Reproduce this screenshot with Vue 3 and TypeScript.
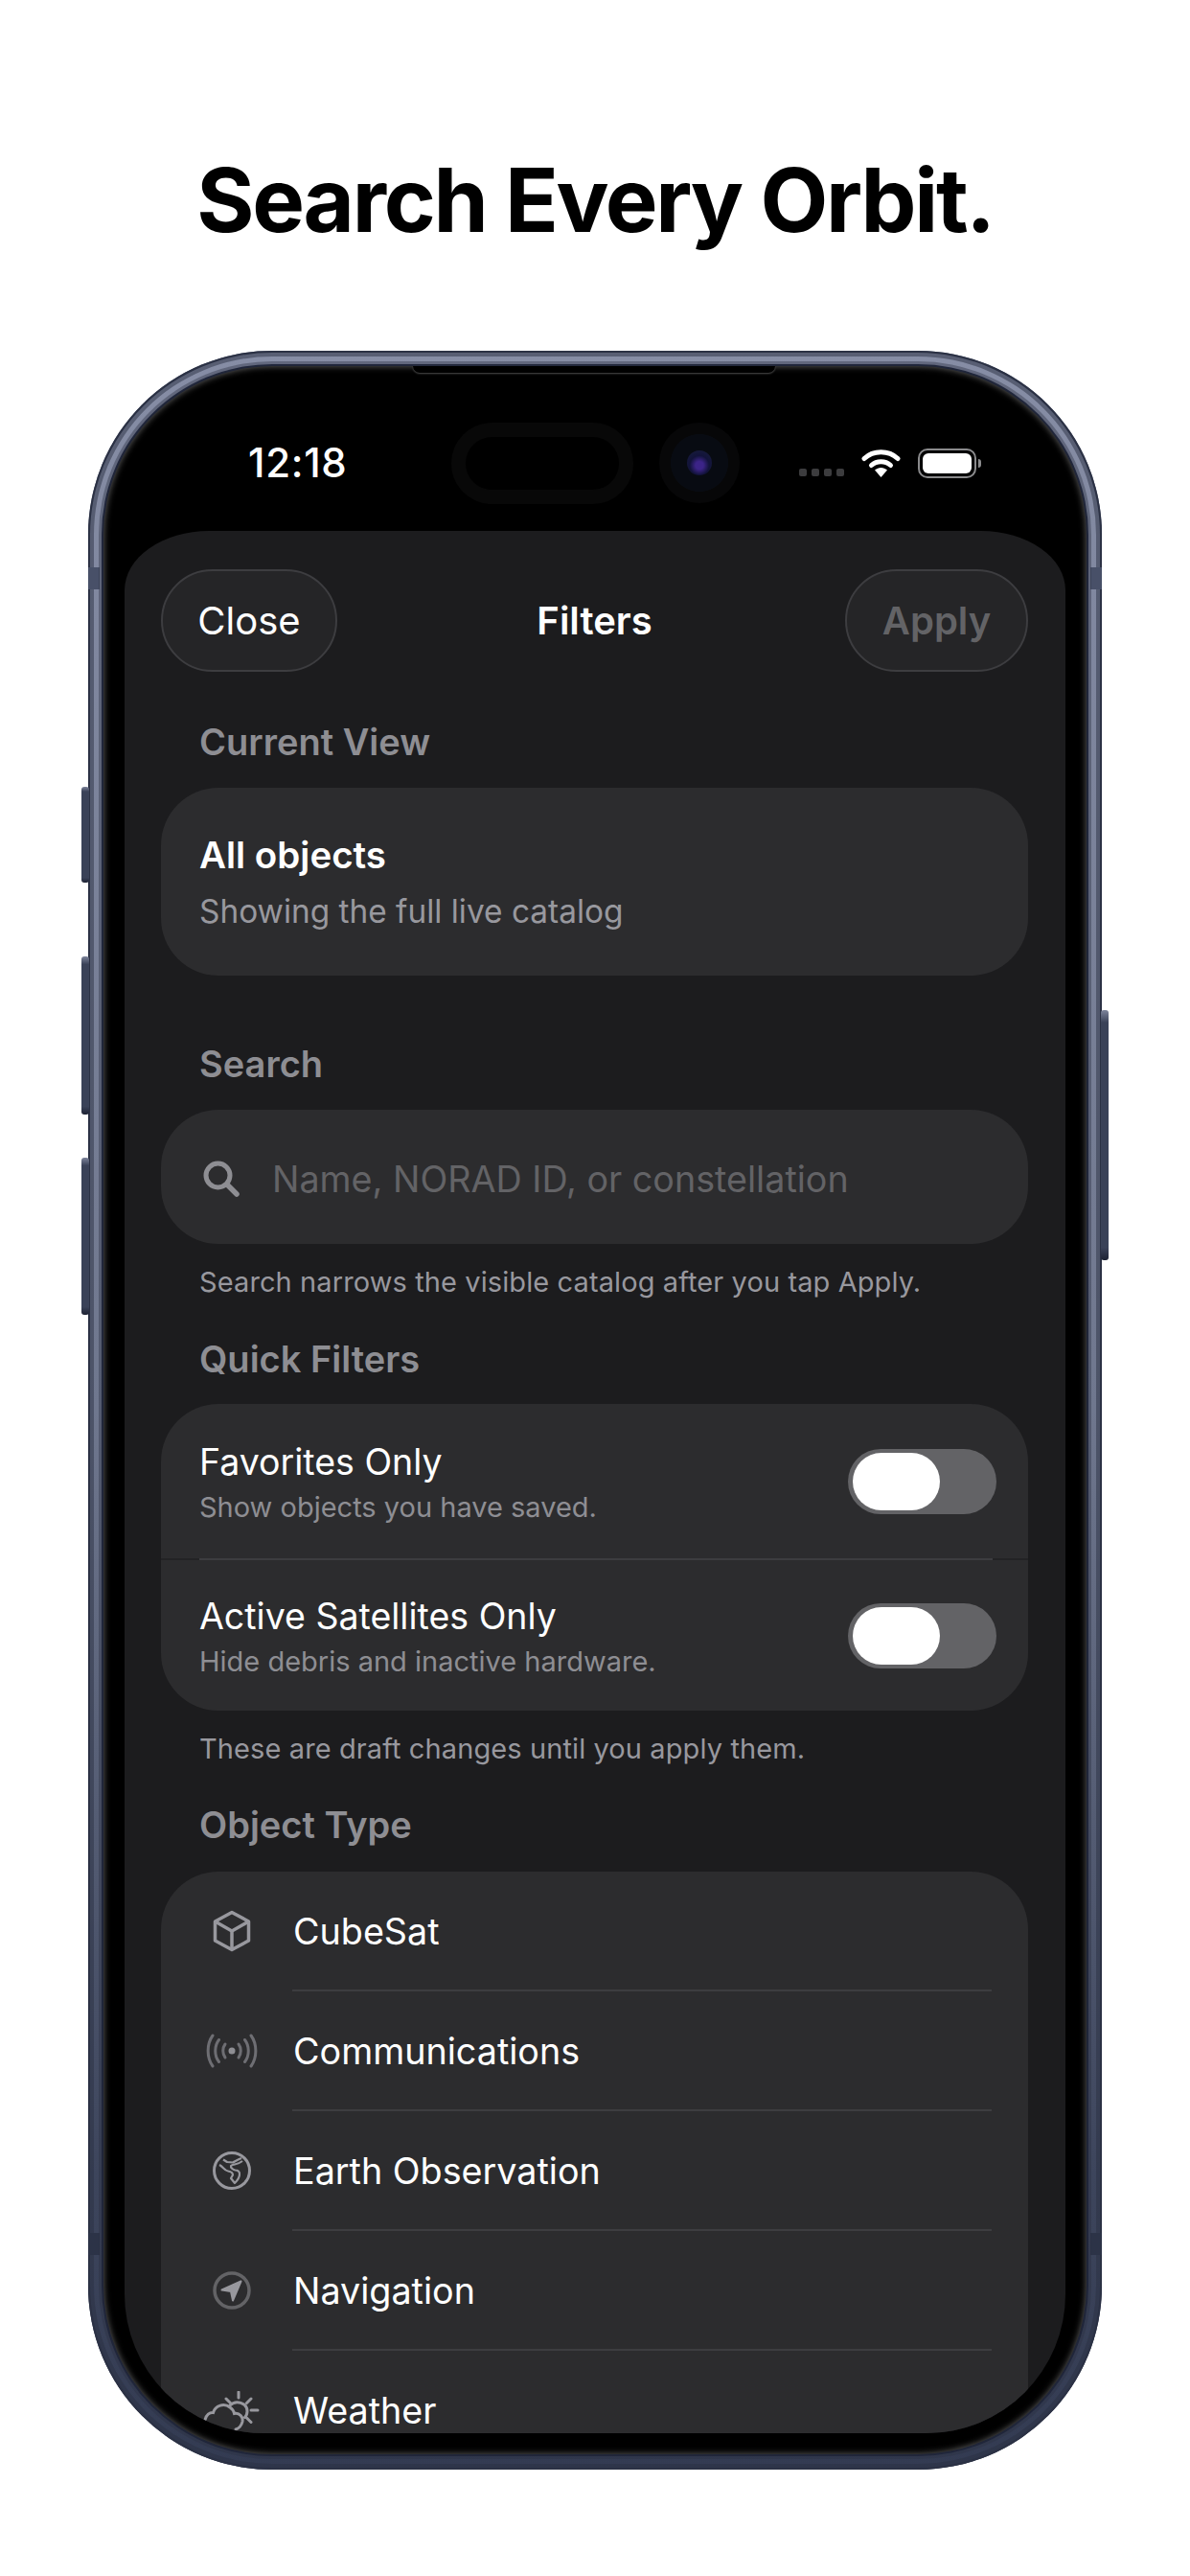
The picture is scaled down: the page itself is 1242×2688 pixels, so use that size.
<template>
  <div class="page">
    <h1 class="headline">Search Every Orbit.</h1>

    <div class="phone">
      <span class="side-btn left b1"></span>
      <span class="side-btn left b2"></span>
      <span class="side-btn left b3"></span>
      <span class="side-btn right b4"></span>
      <span class="band l-top"></span>
      <span class="band r-top"></span>
      <span class="band l-bot"></span>
      <span class="band r-bot"></span>

      <div class="bezel">
        <span class="notch"></span>

        <div class="status">
          <span class="time">12:18</span>
          <span class="island"></span>
          <span class="camera"><i></i></span>
          <span class="signal"><i v-for="n in 4" :key="n"></i></span>
          <svg class="wifi" viewBox="0 0 41 30" width="41" height="30">
            <path d="M3 10.5C12.5 1.5 28.500 1.500 38 10.500" fill="none" stroke="#fff" stroke-width="5" stroke-linecap="round" />
            <path d="M10.500 17.500C16 12.500 25 12.500 30.500 17.500" fill="none" stroke="#fff" stroke-width="5" stroke-linecap="round" />
            <path d="M14 22.500C18 19 23 19 27 22.500L20.500 30Z" fill="#fff" />
          </svg>
          <span class="battery"><i></i></span>
          <span class="battery-tip"></span>
        </div>

        <div class="sheet">
          <div class="sheet-head">
            <button class="pill close">Close</button>
            <span class="sheet-title">Filters</span>
            <button class="pill apply">Apply</button>
          </div>

          <div class="section-label first">Current View</div>
          <div class="card view-card">
            <div class="view-title">All objects</div>
            <div class="view-sub">Showing the full live catalog</div>
          </div>

          <div class="section-label search-label">Search</div>
          <div class="card search-card">
            <svg class="search-icon" viewBox="0 0 38 38" width="38" height="38">
              <circle cx="15.500" cy="15.500" r="12.500" fill="none" stroke="#8e8e93" stroke-width="5" />
              <path d="M25 25L35 35" stroke="#8e8e93" stroke-width="5.500" stroke-linecap="round" />
            </svg>
            <span class="placeholder">Name, NORAD ID, or constellation</span>
          </div>
          <div class="hint">Search narrows the visible catalog after you tap Apply.</div>

          <div class="section-label quick-label">Quick Filters</div>
          <div class="card">
            <template v-for="(item, i) in toggles" :key="item.title">
              <div class="divider" v-if="i > 0"><i></i></div>
              <div class="toggle-row" :class="{ 'is-first': i === 0 }">
                <div class="toggle-text">
                  <div class="toggle-title">{{ item.title }}</div>
                  <div class="toggle-sub">{{ item.sub }}</div>
                </div>
                <span class="toggle"><i></i></span>
              </div>
            </template>
          </div>
          <div class="hint">These are draft changes until you apply them.</div>

          <div class="section-label type-label">Object Type</div>
          <div class="card">
            <template v-for="(type, i) in types" :key="type.name">
              <div class="type-divider" v-if="i > 0"></div>
              <div class="type-row">
                <span class="type-icon">
                  <svg v-if="type.icon === 'cube'" viewBox="0 0 40 44" width="40" height="44" fill="none" stroke="#98989e" stroke-width="3.500" stroke-linejoin="round">
                    <path d="M20 2.500L37.500 12V32L20 41.500L2.500 32V12Z" />
                    <path d="M2.500 12L20 22L37.500 12M20 22V41.500" />
                  </svg>
                  <svg v-else-if="type.icon === 'antenna'" viewBox="0 0 54 36" width="54" height="36" fill="none" stroke="#6e6e73" stroke-width="3" stroke-linecap="round">
                    <circle cx="27" cy="18" r="3.500" fill="#8e8e93" stroke="none" />
                    <path d="M20 11C17 15 17 21 20 25M34 11C37 15 37 21 34 25" />
                    <path d="M13.500 6.500C8.500 13 8.500 23 13.500 29.500M40.500 6.500C45.500 13 45.500 23 40.500 29.500" />
                    <path d="M7 2C0.500 11 0.500 25 7 34M47 2C53.500 11 53.500 25 47 34" />
                  </svg>
                  <svg v-else-if="type.icon === 'earth'" viewBox="0 0 40 40" width="40" height="40" fill="none" stroke="#98989e">
                    <circle cx="20" cy="20" r="18.500" stroke-width="3" />
                    <path d="M30 7C26 8.500 24 10 21 11.500L15 11L11 8.500M7 14C11 16 12 20 16 20.500C19 21 21 22 21 24.500L19 28L23 33C26 30 28 27 28 24C28.500 21 26 19.500 23.500 19.500C21 19 18.500 17 19 15C21 13 26 14 31 10" stroke-width="2.200" stroke-linejoin="round" />
                  </svg>
                  <svg v-else-if="type.icon === 'nav'" viewBox="0 0 40 40" width="40" height="40">
                    <circle cx="20" cy="20" r="18" fill="none" stroke="#636366" stroke-width="3.500" />
                    <path d="M29.500 10.500L9.500 19.500L19 21L21 30.500Z" fill="#98989e" stroke="#98989e" stroke-width="2" stroke-linejoin="round" />
                  </svg>
                  <svg v-else class="weather" viewBox="0 0 60 50" width="60" height="50" fill="none" stroke="#98989e" stroke-width="3" stroke-linecap="round">
                    <path d="M37 1V7M24 8L28.500 12.500M50 8L45.500 12.500M50 20H57M45.500 28L50 32.500" />
                    <path d="M28 15C34 9 46 12 46 21C46 24 45 26 43.500 27.500" />
                    <path d="M2 30C3 25 7 22 10.500 22.500C12.500 15 22 12 28 17C31 19 32 21 32.500 23.500C38 22.500 42 27 41 32C40 36 37 39 34 40" />
                  </svg>
                </span>
                <span class="type-name">{{ type.name }}</span>
              </div>
            </template>
          </div>
        </div>
      </div>
    </div>
  </div>
</template>

<script setup lang="ts">
const toggles = [
  { title: 'Favorites Only', sub: 'Show objects you have saved.' },
  { title: 'Active Satellites Only', sub: 'Hide debris and inactive hardware.' },
]

const types = [
  { name: 'CubeSat', icon: 'cube' },
  { name: 'Communications', icon: 'antenna' },
  { name: 'Earth Observation', icon: 'earth' },
  { name: 'Navigation', icon: 'nav' },
  { name: 'Weather', icon: 'weather' },
]
</script>

<style>
html,
body {
  margin: 0;
  background: #fff;
}
</style>

<style scoped>
.page {
  width: 1242px;
  height: 2688px;
  background: #fff;
  display: flex;
  flex-direction: column;
  align-items: center;
  font-family: Inter, "Liberation Sans", sans-serif;
  overflow: hidden;
}

.headline {
  margin: 159px 0 107px;
  font-size: 92px;
  line-height: 100px;
  font-weight: 700;
  letter-spacing: -2.300px;
  color: #000;
}

.phone {
  position: relative;
  width: 1058px;
  height: 2211px;
  padding: 16px;
  box-sizing: border-box;
  border-radius: 192px;
  background: linear-gradient(180deg, #868da5 0%, #6f778e 50%, #3d455c 86%, #333b52 100%);
  box-shadow: inset 0 0 0 2px #2b3144, inset 0 0 0 6px rgba(42, 48, 66, 0.5);
}

.side-btn {
  position: absolute;
  width: 8px;
  border-radius: 3px;
  background: linear-gradient(180deg, #7d849b 0, #3a4258 5%, #3a4258 95%, #1d2233 100%);
}
.side-btn.left { left: -7px; }
.side-btn.right { right: -7px; }
.b1 { top: 455px; height: 100px; }
.b2 { top: 632px; height: 165px; }
.b3 { top: 842px; height: 164px; }
.b4 { top: 688px; height: 261px; }

.band {
  position: absolute;
  width: 12px;
  height: 23px;
  background: #485068;
}
.l-top { left: 0; top: 226px; }
.r-top { right: 0; top: 226px; }
.l-bot { left: 0; top: 1964px; background: #2c3347; }
.r-bot { right: 0; top: 1964px; background: #2c3347; }

.bezel {
  position: relative;
  height: 100%;
  display: flex;
  flex-direction: column;
  background: #000;
  border-radius: 176px;
  box-shadow: inset 0 0 7px rgba(255, 255, 255, 0.4), 0 0 0 2px #20263a, 0 0 0 5px rgba(42, 48, 66, 0.4);
}

.notch {
  position: absolute;
  left: 323px;
  top: 0;
  width: 378px;
  height: 7px;
  background: #000;
  border-radius: 0 0 10px 10px;
  box-shadow: 0 1px 2px rgba(255, 255, 255, 0.3);
}

.status {
  height: 172px;
  flex: none;
  box-sizing: border-box;
  padding: 30px 0 0 151px;
  display: flex;
  align-items: center;
}

.time {
  width: 101px;
  font-size: 42px;
  line-height: 48px;
  font-weight: 500;
  letter-spacing: 0.700px;
  color: #fff;
  white-space: nowrap;
}

.island {
  width: 190px;
  height: 85px;
  margin-left: 111px;
  box-sizing: border-box;
  border-radius: 43px;
  border: 15px solid #080808;
  background: #000;
}

.camera {
  width: 84px;
  height: 84px;
  margin-left: 27px;
  border-radius: 50%;
  background: radial-gradient(circle, #080b12 0 50%, #070708 51% 100%);
  display: flex;
  align-items: center;
  justify-content: center;
}
.camera i {
  width: 26px;
  height: 26px;
  border-radius: 50%;
  background: radial-gradient(circle at 50% 60%, #3c2488 0 20%, #12133a 50%, #1a1f3c 100%);
}

.signal {
  display: flex;
  gap: 5px;
  margin-left: 62px;
  align-self: center;
  padding-top: 20px;
}
.signal i {
  width: 8px;
  height: 8px;
  border-radius: 2px;
  background: #3c3c3e;
}

.wifi {
  margin-left: 18px;
}

.battery {
  width: 61px;
  height: 31px;
  margin-left: 18px;
  box-sizing: border-box;
  border: 2px solid #8a8a8c;
  border-radius: 10px;
  padding: 3px;
  display: flex;
}
.battery i {
  flex: 1;
  background: #fff;
  border-radius: 6px;
}
.battery-tip {
  width: 3px;
  height: 9px;
  margin-left: 2px;
  background: #8a8a8c;
  border-radius: 0 3px 3px 0;
}

.sheet {
  flex: 1;
  min-height: 0;
  margin: 0 22px 22px 22px;
  padding: 40px 39px 0 38px;
  box-sizing: border-box;
  overflow: hidden;
  background: #1c1c1e;
  border-radius: 88px 88px 145px 145px / 62px 62px 145px 145px;
}

.sheet-head {
  display: grid;
  grid-template-columns: 1fr auto 1fr;
  align-items: center;
}

.pill {
  height: 107px;
  box-sizing: border-box;
  border-radius: 54px;
  border: 2px solid #3d3d40;
  background: #252527;
  font-family: inherit;
  font-size: 40px;
  padding: 0;
}
.close {
  width: 184px;
  justify-self: start;
  color: #fff;
  font-weight: 400;
}
.apply {
  width: 191px;
  justify-self: end;
  color: #636366;
  font-weight: 600;
}

.sheet-title {
  font-size: 40px;
  font-weight: 600;
  color: #fff;
}

.section-label {
  padding-left: 40px;
  height: 48px;
  margin-bottom: 24px;
  font-size: 38px;
  line-height: 48px;
  font-weight: 600;
  color: #8e8e93;
}
.first { margin-top: 49px; }
.search-label { margin-top: 68px; }
.quick-label { margin-top: 36px; margin-bottom: 23px; }
.type-label { margin-top: 35px; margin-bottom: 25px; }

.card {
  background: #2c2c2e;
  border-radius: 60px;
  overflow: hidden;
}

.view-card {
  height: 196px;
  box-sizing: border-box;
  padding: 46px 40px 0;
}
.view-title {
  font-size: 38.500px;
  line-height: 48px;
  font-weight: 600;
  color: #fff;
}
.view-sub {
  margin-top: 13px;
  font-size: 33.400px;
  line-height: 44px;
  color: #98989e;
}

.search-card {
  height: 140px;
  display: flex;
  align-items: center;
  padding-left: 44px;
  gap: 34px;
}
.search-icon {
  margin-top: 4px;
  flex: none;
}
.placeholder {
  padding-top: 3px;
  font-size: 37.700px;
  color: #636366;
}

.hint {
  margin-top: 20px;
  padding-left: 40px;
  font-size: 29px;
  line-height: 40px;
  letter-spacing: 0.100px;
  color: #98989e;
}

.toggle-row {
  height: 157px;
  display: flex;
  align-items: center;
  justify-content: space-between;
  padding: 0 33px 0 40px;
}
.toggle-row.is-first {
  height: 161px;
}
.toggle-text {
  padding-top: 5px;
}
.toggle-title {
  font-size: 37.500px;
  line-height: 46px;
  color: #fff;
}
.toggle-sub {
  margin-top: 4px;
  font-size: 29px;
  line-height: 40px;
  color: #8e8e93;
}
.toggle {
  width: 155px;
  height: 68px;
  box-sizing: border-box;
  padding: 4px 5px;
  border-radius: 34px;
  background: #636366;
}
.toggle i {
  display: block;
  width: 91px;
  height: 60px;
  border-radius: 30px;
  background: #fff;
}

.divider {
  height: 2px;
  background: #232325;
}
.divider i {
  display: block;
  height: 2px;
  margin: 0 37px 0 40px;
  background: #3d3d40;
}

.type-row {
  height: 123px;
  display: flex;
  align-items: center;
  padding-left: 44px;
  gap: 34px;
}
.type-icon {
  width: 60px;
  flex: none;
  display: flex;
  justify-content: center;
}
.weather {
  margin-top: 10px;
}
.type-name {
  font-size: 37.700px;
  color: #fff;
}
.type-divider {
  height: 2px;
  margin: 0 38px 0 137px;
  background: #3d3d40;
}
</style>
